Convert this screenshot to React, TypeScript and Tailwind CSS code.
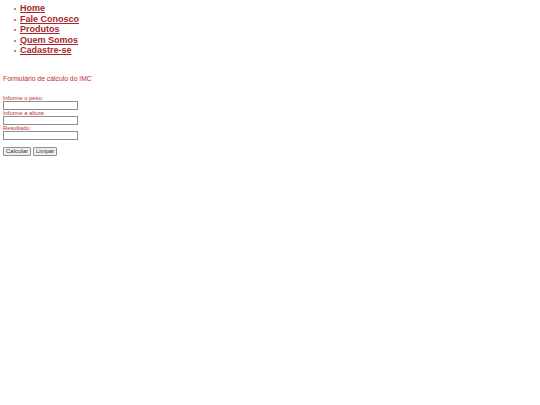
export default function App() {
  const links = ["Home", "Fale Conosco", "Produtos", "Quem Somos", "Cadastre-se"];
  return (
    <div className="min-h-[405px] bg-white px-[3px] font-['Liberation_Sans',Arial,sans-serif] text-[#b0272d]">
      <ul className="mt-[3px] pl-[11px] text-[9px] font-bold leading-[10.5px]">
        {links.map((l) => (
          <li key={l} className="flex items-center gap-[4px]">
            <span className="mt-[2px] h-[2px] w-[2px] rounded-full bg-[#c0504f]" />
            <a href="#" className="text-[#a8262b] underline">
              {l}
            </a>
          </li>
        ))}
      </ul>
      <p className="mt-[19px] text-[6.8px] leading-[8px] text-[#c02a30]">Formulário de cálculo do IMC</p>
      <form className="mt-[12px] text-[5.8px] leading-[6px] text-[#c02a30]" onSubmit={(e) => e.preventDefault()}>
        <label className="block">Informe o peso:</label>
        <input type="text" className="block h-[9px] w-[75px] border border-[#8f8f8f] bg-white" />
        <label className="block">Informe a altura:</label>
        <input type="text" className="block h-[9px] w-[75px] border border-[#8f8f8f] bg-white" />
        <label className="block">Resultado:</label>
        <input type="text" className="block h-[9px] w-[75px] border border-[#8f8f8f] bg-white" />
        <div className="mt-[7px] flex gap-[2px] text-black">
          <button type="button" className="h-[9px] rounded-[1px] border border-[#8f8f8f] bg-[#efefef] px-[2px] text-[6px] leading-none text-[#333]">
            Calcular
          </button>
          <button type="reset" className="h-[9px] rounded-[1px] border border-[#8f8f8f] bg-[#efefef] px-[2px] text-[6px] leading-none text-[#333]">
            Limpar
          </button>
        </div>
      </form>
    </div>
  );
}
